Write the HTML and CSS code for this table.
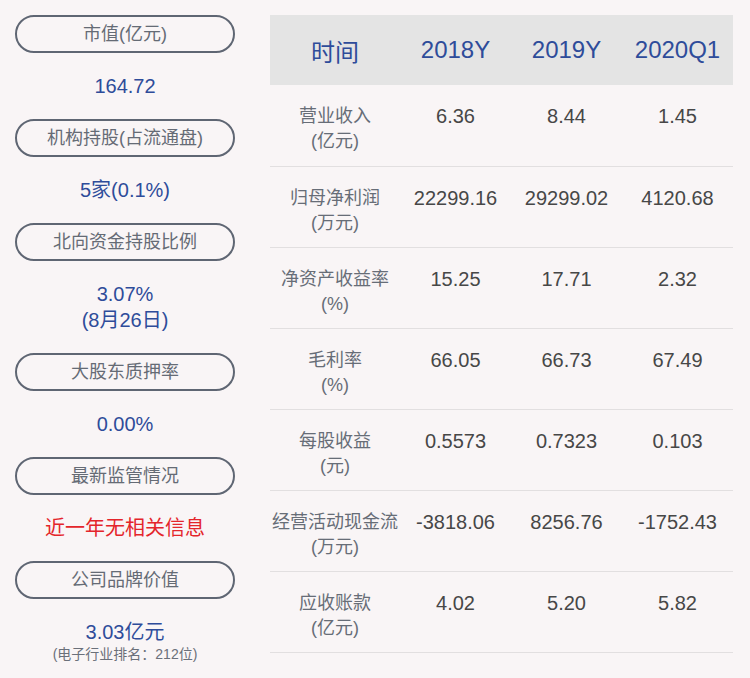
FILE: index.html
```html
<!DOCTYPE html>
<html lang="zh">
<head>
<meta charset="utf-8">
<link rel="stylesheet" href="styles.css">
</head>
<body>
<div class="page">
  <div class="side">
    <div class="pill">市值(亿元)</div>
    <div class="val">164.72</div>
    <div class="pill">机构持股(占流通盘)</div>
    <div class="val">5家(0.1%)</div>
    <div class="pill">北向资金持股比例</div>
    <div class="val">3.07%<br>(8月26日)</div>
    <div class="pill">大股东质押率</div>
    <div class="val">0.00%</div>
    <div class="pill">最新监管情况</div>
    <div class="val red">近一年无相关信息</div>
    <div class="pill">公司品牌价值</div>
    <div class="val last">3.03亿元<div class="note">(电子行业排名：212位)</div></div>
  </div>
  <table class="fin">
    <colgroup><col class="c1"><col class="cn"><col class="cn"><col class="cn"></colgroup>
    <thead>
      <tr><th>时间</th><th>2018Y</th><th>2019Y</th><th>2020Q1</th></tr>
    </thead>
    <tbody>
      <tr><td class="lab">营业收入<br>(亿元)</td><td>6.36</td><td>8.44</td><td>1.45</td></tr>
      <tr><td class="lab">归母净利润<br>(万元)</td><td>22299.16</td><td>29299.02</td><td>4120.68</td></tr>
      <tr><td class="lab">净资产收益率<br>(%)</td><td>15.25</td><td>17.71</td><td>2.32</td></tr>
      <tr><td class="lab">毛利率<br>(%)</td><td>66.05</td><td>66.73</td><td>67.49</td></tr>
      <tr><td class="lab">每股收益<br>(元)</td><td>0.5573</td><td>0.7323</td><td>0.103</td></tr>
      <tr><td class="lab">经营活动现金流<br>(万元)</td><td>-3818.06</td><td>8256.76</td><td>-1752.43</td></tr>
      <tr><td class="lab">应收账款<br>(亿元)</td><td>4.02</td><td>5.20</td><td>5.82</td></tr>
    </tbody>
  </table>
</div>
</body>
</html>
```

FILE: styles.css
```css
html, body {
  margin: 0;
  padding: 0;
  background: #f9f5f6;
}
body {
  font-family: "Liberation Sans", "Noto Sans CJK SC", sans-serif;
  width: 750px;
  height: 678px;
  overflow: hidden;
}
.page {
  display: flex;
  align-items: flex-start;
  gap: 35px;
  padding: 15px 0 0 15px;
}
.side {
  width: 220px;
  display: flex;
  flex-direction: column;
}
.pill {
  box-sizing: border-box;
  height: 38px;
  border: 2px solid #5f6673;
  border-radius: 19px;
  text-align: center;
  line-height: 34px;
  font-size: 18px;
  color: #656b75;
}
.val {
  padding: 20px 0;
  text-align: center;
  font-size: 20px;
  line-height: 26px;
  color: #2e4c9a;
}
.val.red {
  color: #e4252b;
}
.val.last {
  padding-bottom: 0;
}
.note {
  font-size: 14px;
  line-height: 18px;
  color: #6b707a;
}
.fin {
  width: 463px;
  border-collapse: collapse;
  table-layout: fixed;
}
.c1 { width: 130px; }
.cn { width: 111px; }
.fin th {
  height: 70px;
  padding: 0;
  background: #e4e4e4;
  color: #2e4c9a;
  font-size: 24px;
  font-weight: normal;
  text-align: center;
  vertical-align: middle;
}
.fin td {
  height: 81px;
  box-sizing: border-box;
  padding: 19px 0 0;
  border-bottom: 1px solid #e2dfe0;
  vertical-align: top;
  text-align: center;
  font-size: 20px;
  line-height: 25px;
  color: #474747;
  white-space: nowrap;
}
.fin td.lab {
  font-size: 18px;
  color: #676d77;
}
```
